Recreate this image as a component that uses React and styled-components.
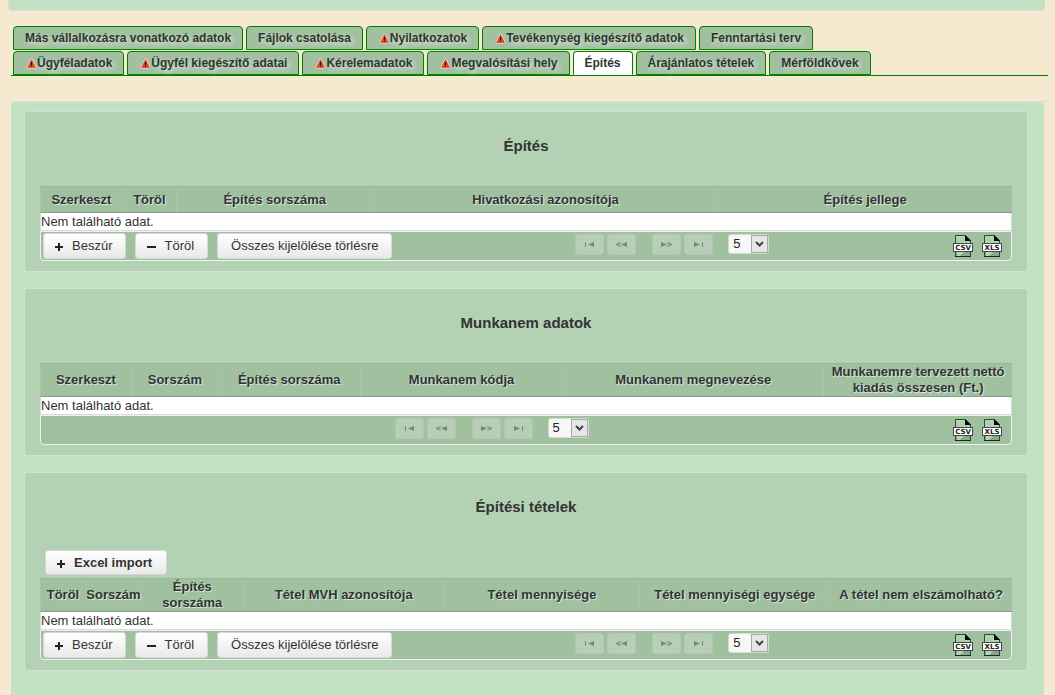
import React from 'react';
import styled, { createGlobalStyle } from 'styled-components';

const Global = createGlobalStyle`
  *, *::before, *::after { box-sizing: border-box; }
  body {
    margin: 0;
    background: #f5ead0;
    color: #333;
    font: 13px/16px "Liberation Sans", Arial, sans-serif;
  }
`;

const Page = styled.div`
  display: flow-root;
`;

const UpperPanel = styled.header`
  height: 11px;
  margin: 0 10px 0 8px;
  padding: 0 20px;
  background: #c3e2c2;
  border: 1px solid #d9dadb;
  border-top: 0;
  border-radius: 0 0 4px 4px;
`;

const UpperPanelEdge = styled.div`
  height: 1px;
  background: #d9dadb;
`;

const Tabs = styled.nav`
  margin: 15px 7px 0 11px;
  padding: 0 2px;
  border-bottom: 1px solid #008000;
`;

const TabRow = styled.div`
  display: flex;
  gap: 3px;
  margin-bottom: 1px;
  &:last-child { margin-bottom: 0; }
`;

const Tab = styled.a`
  display: flex;
  align-items: center;
  height: 24px;
  padding: 0 11px;
  border: 1px solid #008000;
  border-bottom-color: ${p => (p.$active ? '#fff' : '#008000')};
  border-radius: 4px 4px 0 0;
  background: ${p => (p.$active ? '#fff' : '#a1c0a0')};
  color: #333;
  font-size: 12px;
  font-weight: bold;
  text-decoration: none;
  white-space: nowrap;
  text-shadow: ${p => (p.$active ? 'none' : '2px 2px 5px #dcefdc')};
`;

const WarnSvg = styled.svg`
  width: 11px;
  height: 11px;
  margin-left: 1px;
`;

const Rule = styled.div`
  height: 1px;
  margin: 25px 5px 0 8px;
  background: #dcdcdc;
`;

const Main = styled.main`
  display: flex;
  flex-direction: column;
  gap: 16px;
  margin: 0 11px;
  padding: 9px 16px 32px 13px;
  background: #c3e2c2;
  border-radius: 4px 4px 0 0;
`;

const Panel = styled.section`
  padding: 24px 15px 10px;
  background: #b3d2b3;
  border: 1px solid #d9dcd9;
  border-radius: 4px;
`;

const Title = styled.h2`
  margin: 0 0 30px;
  font-size: 15px;
  line-height: 20px;
  text-align: center;
`;

const Toolbar = styled.div`
  display: flex;
  align-items: flex-end;
  height: 31px;
  padding: 0 5px 3px;
`;

const Table = styled.table`
  width: 100%;
  table-layout: fixed;
  border-collapse: separate;
  border-spacing: 0;
`;

const Th = styled.th`
  height: ${p => (p.$tall ? 33 : 27)}px;
  padding: 0;
  background: #a1c0a0;
  border: 1px solid #a8c6a7;
  border-width: 1px 0 1px 1px;
  border-color: #97b897 #a8c6a7 #869f86 #a8c6a7;
  line-height: 16px;
  text-align: center;
  text-shadow: 1px 1px 1px #dcecdc;
`;

const Empty = styled.td`
  height: 18px;
  padding: 1px 0 0;
  background: #fff;
  border: 1px solid #d9d9d9;
  border-top: 0;
  line-height: 16px;
`;

const Footer = styled.div`
  display: flex;
  align-items: center;
  height: 30px;
  padding: 0 2px;
  background: #a1c0a0;
  border: 1px solid #eef2ee;
  border-radius: 0 0 4px 4px;
`;

const Actions = styled.div`
  display: flex;
  gap: 9px;
  margin-right: 12px;
`;

const Button = styled.button`
  display: flex;
  align-items: center;
  gap: 7px;
  height: ${p => (p.$strong ? 25 : 26)}px;
  padding: 0 ${p => (p.$strong ? 14 : 13)}px 0 ${p => (p.$icon ? 11 : 13)}px;
  border: 1px solid #d5d8d5;
  border-radius: 3px;
  background: linear-gradient(#fff, #e9e9e9);
  color: #333;
  font: ${p => (p.$strong ? 'bold' : 'normal')} 13px/16px "Liberation Sans", Arial, sans-serif;
  white-space: nowrap;
`;

const ButtonSvg = styled.svg`
  width: 10px;
  height: 10px;
`;

const Pager = styled.div`
  flex: 1;
  display: flex;
  justify-content: center;
  align-items: center;
  gap: 3px;
  padding-bottom: 4px;
`;

const PageButton = styled.button`
  width: 29px;
  height: 21px;
  margin-left: ${p => (p.$apart ? 13 : 0)}px;
  padding: 0;
  border: 1px solid #b0cab0;
  border-radius: 3px;
  background: #b8ceb8;
`;

const PageSvg = styled.svg`
  display: block;
  width: 11px;
  height: 7px;
  margin: 0 auto;
`;

const SelectBox = styled.div`
  position: relative;
  width: 41px;
  height: 20px;
  margin-left: 12px;
  border: 1px solid #d3dcd3;
  border-radius: 3px;
  background: #f7f7f7;
`;

const Select = styled.select`
  appearance: none;
  display: block;
  width: 100%;
  height: 100%;
  padding: 0 4px;
  border: 0;
  background: transparent;
  color: #222;
  font: 13px/16px "Liberation Sans", Arial, sans-serif;
`;

const SelectArrow = styled.svg`
  position: absolute;
  top: 0;
  right: 0;
  width: 17px;
  height: 18px;
  pointer-events: none;
`;

const Exports = styled.div`
  display: flex;
  gap: 9px;
  padding: 0 7px 0 13px;
`;

const ExportButton = styled.button`
  padding: 0;
  border: 0;
  background: none;
`;

const FileSvg = styled.svg`
  display: block;
  width: 20px;
  height: 22px;
`;

const Warning = () => (
  <WarnSvg viewBox="0 0 11 11" aria-hidden="true">
    <path d="M5.5 1.5 9.5 9.5h-8Z" fill="#f2e4d8" stroke="#f2e4d8" strokeWidth="2" strokeLinejoin="round" />
    <path d="M5.5 1.5 9.5 9.5h-8Z" fill="#ee4424" stroke="#d83a20" strokeWidth=".6" strokeLinejoin="round" />
    <path d="M4.9 4h1.2v3H4.9zM4.9 7.6h1.2v1.1H4.9z" fill="#1c1410" />
  </WarnSvg>
);

const Sign = ({ minus }) => (
  <ButtonSvg viewBox="0 0 10 10" aria-hidden="true">
    <path d={minus ? 'M0 5h9v2H0z' : 'M0 5h3V2h2v3h3v2H5v3H3V7H0z'} fill="#222" />
  </ButtonSvg>
);

const pageMarks = {
  first: 'M1 1h1v5H1zM10 1v5L4 3.5Z',
  prev: 'M11 1v5L5 3.5ZM5 1v1L2 3.5 5 5v1L0 4V3Z',
  next: 'M0 1v5l6-2.5ZM6 1v1l3 1.5L6 5v1l5-2V3Z',
  last: 'M9 1h1v5H9zM1 1v5l6-2.5Z',
};

const PageStep = ({ kind, label, apart }) => (
  <PageButton type="button" disabled aria-label={label} $apart={apart}>
    <PageSvg viewBox="0 0 11 7"><path d={pageMarks[kind]} fill="#728a72" /></PageSvg>
  </PageButton>
);

const FileIcon = ({ type }) => (
  <FileSvg viewBox="0 0 20 22" aria-hidden="true">
    <path d="M2.5.5h10l5 5v16h-15Z" fill="#aed2ae" stroke="#2f4a32" />
    <path d="M12 0l6 6h-6Z" fill="#000" />
    <path d="M3 17h14v4H3z" fill="#86aa86" />
    <path d="M4 17h7l-4 4H4z" fill="#b4d8b4" />
    <path d="M2 21.5h16" stroke="#1c2a1c" />
    <rect x=".5" y="8.5" width="19" height="8" fill="#fff" stroke="#444" />
    <text x="10" y="15" textAnchor="middle" fontFamily="DejaVu Sans, sans-serif" fontSize="7" fontWeight="bold" fill="#222">{type}</text>
  </FileSvg>
);

const TabItem = ({ label, warn, active }) => (
  <Tab href="#" $active={active} aria-current={active ? 'page' : undefined}>
    {warn && <Warning />}
    {label}
  </Tab>
);

const DataPanel = ({ title, columns, tall, actions, importButton }) => (
  <Panel>
    <Title>{title}</Title>
    {importButton && (
      <Toolbar>
        <Button type="button" $strong $icon><Sign />Excel import</Button>
      </Toolbar>
    )}
    <Table>
      <colgroup>
        {columns.map(([name, share]) => <col key={name} style={{ width: `${share / 9.73}%` }} />)}
      </colgroup>
      <thead>
        <tr>{columns.map(([name]) => <Th key={name} scope="col" $tall={tall}>{name}</Th>)}</tr>
      </thead>
      <tbody>
        <tr><Empty colSpan={columns.length}>Nem található adat.</Empty></tr>
      </tbody>
    </Table>
    <Footer>
      {actions && (
        <Actions>
          <Button type="button" $icon><Sign />Beszúr</Button>
          <Button type="button" $icon><Sign minus />Töröl</Button>
          <Button type="button">Összes kijelölése törlésre</Button>
        </Actions>
      )}
      <Pager>
        <PageStep kind="first" label="Első oldal" />
        <PageStep kind="prev" label="Előző oldal" />
        <PageStep kind="next" label="Következő oldal" apart />
        <PageStep kind="last" label="Utolsó oldal" />
        <SelectBox>
          <Select aria-label="Sorok száma" defaultValue="5">
            <option>5</option>
          </Select>
          <SelectArrow viewBox="0 0 17 18">
            <rect x=".5" y=".5" width="16" height="17" fill="#e6e6e6" stroke="#aaa" />
            <path d="M5 7l3.5 3.5L12 7" fill="none" stroke="#444" strokeWidth="2" />
          </SelectArrow>
        </SelectBox>
      </Pager>
      <Exports>
        <ExportButton type="button" aria-label="CSV"><FileIcon type="CSV" /></ExportButton>
        <ExportButton type="button" aria-label="XLS"><FileIcon type="XLS" /></ExportButton>
      </Exports>
    </Footer>
  </Panel>
);

const tabRows = [
  [
    { label: 'Más vállalkozásra vonatkozó adatok' },
    { label: 'Fájlok csatolása' },
    { label: 'Nyilatkozatok', warn: true },
    { label: 'Tevékenység kiegészítő adatok', warn: true },
    { label: 'Fenntartási terv' },
  ],
  [
    { label: 'Ügyféladatok', warn: true },
    { label: 'Ügyfél kiegészítő adatai', warn: true },
    { label: 'Kérelemadatok', warn: true },
    { label: 'Megvalósítási hely', warn: true },
    { label: 'Építés', active: true },
    { label: 'Árajánlatos tételek' },
    { label: 'Mérföldkövek' },
  ],
];

export default function App() {
  return (
    <Page>
      <Global />
      <UpperPanel><UpperPanelEdge /></UpperPanel>
      <Tabs>
        {tabRows.map((row, i) => (
          <TabRow key={i}>{row.map(tab => <TabItem key={tab.label} {...tab} />)}</TabRow>
        ))}
      </Tabs>
      <Rule />
      <Main>
        <DataPanel
          title="Építés"
          actions
          columns={[['Szerkeszt', 82], ['Töröl', 54], ['Építés sorszáma', 197], ['Hivatkozási azonosítója', 345], ['Építés jellege', 295]]}
        />
        <DataPanel
          title="Munkanem adatok"
          tall
          columns={[['Szerkeszt', 91], ['Sorszám', 87], ['Építés sorszáma', 142], ['Munkanem kódja', 203], ['Munkanem megnevezése', 261], ['Munkanemre tervezett nettó kiadás összesen (Ft.)', 189]]}
        />
        <DataPanel
          title="Építési tételek"
          tall
          actions
          importButton
          columns={[['Töröl', 45], ['Sorszám', 56], ['Építés sorszáma', 102], ['Tétel MVH azonosítója', 201], ['Tétel mennyisége', 196], ['Tétel mennyiségi egysége', 190], ['A tétel nem elszámolható?', 183]]}
        />
      </Main>
    </Page>
  );
}
